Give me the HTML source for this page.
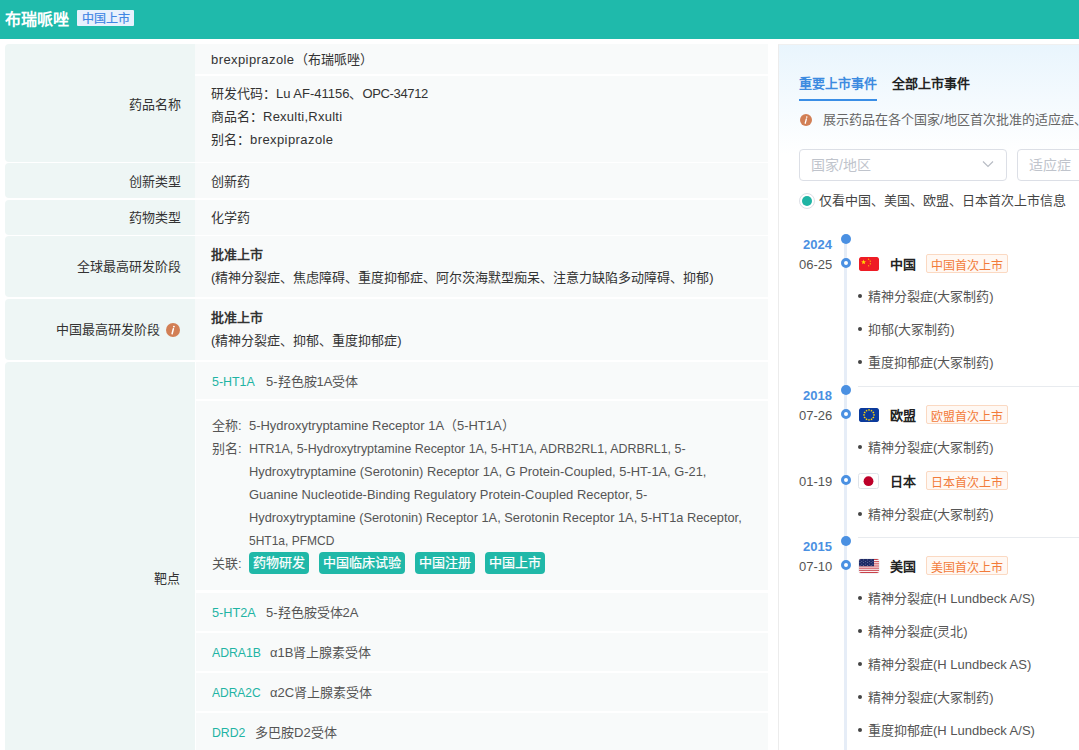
<!DOCTYPE html>
<html lang="zh-CN"><head>
<meta charset="utf-8">
<style>
*{margin:0;padding:0;box-sizing:border-box}
html,body{width:1079px;height:750px;overflow:hidden;background:#fff}
body{font-family:"Liberation Sans",sans-serif;font-size:13px;color:#333;position:relative}
.abs{position:absolute}
.hdr{left:0;top:0;width:1079px;height:39px;background:#1fbaab}
.hdr .t{left:5px;top:9px;font-size:16px;font-weight:bold;color:#fff;line-height:22px;white-space:nowrap}
.hdr .tag{left:77px;top:10px;height:16px;width:57px;background:#e8f1fd;color:#3f86e4;font-size:12px;line-height:18px;text-align:center;border-radius:1px;-webkit-text-stroke:0.2px #3f86e4}
.lab{left:5px;width:190px;background:#eef6f5;border-radius:4px 0 0 4px;text-align:right;padding-right:14px;color:#333;white-space:nowrap}
.val{left:195px;width:573px;background:#f8fafa;color:#444;white-space:nowrap}
.tx{position:absolute;white-space:nowrap;line-height:18px}
.rp{left:778px;top:44px;width:301px;height:706px;border-left:1px solid #ececec;border-top:1px solid #f0f0f0;background:linear-gradient(180deg,#e9f5fd 0px,#ffffff 110px)}
.sv{left:196px;width:572px;background:#f8fafa}
.tg{color:#555}
.tc{color:#1fb4a4}
.gp{display:inline-block;width:10px}
.pill{height:22px;background:#20b8a8;color:#fff;-webkit-text-stroke:0.25px #fff;border-radius:4px;text-align:center;line-height:22px;font-size:13px;white-space:nowrap}
.info{width:12px;height:12px;border-radius:50%;background:#d0825a}
.sel{height:32px;border:1px solid #dcdfe6;border-radius:4px;background:#fff;padding-left:11px;line-height:30px;font-size:14px;color:#c0c4cc;white-space:nowrap;overflow:hidden}
.hr{left:858px;width:221px;height:1px;background:#e8ebef}
.yr{position:absolute;left:803px;font-weight:bold;color:#4a90e2;line-height:18px}
.dt{position:absolute;left:799px;color:#555;line-height:18px}
.yd{position:absolute;left:841px;width:10px;height:10px;border-radius:50%;background:#4a90e2}
.dd{position:absolute;left:841px;width:10px;height:10px;border-radius:50%;border:3px solid #4a90e2;background:#fff}
.flag{position:absolute;left:859px;width:20px;height:14px;border-radius:2px;overflow:hidden}
.cn{position:absolute;left:890px;font-weight:bold;color:#222;line-height:18px}
.otag{position:absolute;left:926px;width:82px;height:19px;border:1px solid #fbd9c2;background:#fff8f3;color:#f27b3a;font-size:12px;line-height:22px;text-align:center;border-radius:2px}
.bl{position:absolute;left:858px;width:4px;height:4px;border-radius:50%;background:#444}
.it{position:absolute;left:868px;color:#555;line-height:18px;white-space:nowrap}
</style>
</head>
<body>
<div class="abs hdr">
  <div class="abs t">布瑞哌唑</div>
  <div class="abs tag">中国上市</div>
</div>

<!-- left table -->
<div class="abs lab" style="top: 44px; height: 118px;"></div>
<div class="abs val" style="top: 44px; height: 30px;"></div>
<div class="abs val" style="top: 76px; height: 86px;"></div>
<div class="tx" style="left: 129px; top: 96px;">药品名称</div>
<div class="tx" style="left: 211px; top: 51px;"><span style="letter-spacing: 0.42px;">brexpiprazole</span>（布瑞哌唑）</div>
<div class="tx" style="left: 211px; top: 85px;">研发代码：Lu AF-41156、<span style="letter-spacing: -0.35px;">OPC-34712</span></div>
<div class="tx" style="left: 211px; top: 108px;">商品名：<span style="letter-spacing: 0.25px;">Rexulti,Rxulti</span></div>
<div class="tx" style="left: 211px; top: 131px;">别名：<span style="letter-spacing: 0.42px;">brexpiprazole</span></div>

<div class="abs lab" style="top: 163px; height: 35px;"></div>
<div class="abs val" style="top: 163px; height: 35px;"></div>
<div class="tx" style="left: 129px; top: 173px;">创新类型</div>
<div class="tx" style="left: 211px; top: 173px;">创新药</div>

<div class="abs lab" style="top: 200px; height: 35px;"></div>
<div class="abs val" style="top: 200px; height: 35px;"></div>
<div class="tx" style="left: 129px; top: 209px;">药物类型</div>
<div class="tx" style="left: 211px; top: 209px;">化学药</div>

<div class="abs lab" style="top: 236px; height: 61px;"></div>
<div class="abs val" style="top: 236px; height: 61px;"></div>
<div class="tx" style="left: 77px; top: 258px;">全球最高研发阶段</div>
<div class="tx" style="left: 211px; top: 246px; font-weight: bold;">批准上市</div>
<div class="tx" style="left: 211px; top: 269px;">(精神分裂症、焦虑障碍、重度抑郁症、阿尔茨海默型痴呆、注意力缺陷多动障碍、抑郁)</div>

<div class="abs lab" style="top: 299px; height: 61px;"></div>
<div class="abs val" style="top: 299px; height: 61px;"></div>
<div class="tx" style="left: 56px; top: 321px;">中国最高研发阶段</div>
<svg class="abs" style="left: 166px; top: 323px;" width="14" height="14" viewBox="0 0 14 14"><circle cx="7" cy="7" r="7" fill="#d27f55"></circle><circle cx="7.9" cy="3.6" r="0.95" fill="#fff"></circle><path d="M7.4 5.8 L6.1 10.8" stroke="#fff" stroke-width="1.5" stroke-linecap="round"></path></svg>
<div class="tx" style="left: 211px; top: 309px; font-weight: bold;">批准上市</div>
<div class="tx" style="left: 211px; top: 332px;">(精神分裂症、抑郁、重度抑郁症)</div>

<div class="abs lab" style="top: 362px; height: 400px; border-radius: 4px 0px 0px;"></div>
<div class="tx" style="left: 154px; top: 570px; color: rgb(51, 51, 51);">靶点</div>
<div class="abs" style="left: 195px; top: 362px; width: 573px; height: 400px; background: rgb(255, 255, 255);"></div>
<div class="abs sv" style="top: 362px; height: 37px;"></div>
<div class="abs sv" style="top: 401px; height: 189px;"></div>
<div class="abs sv" style="top: 593px; height: 38px;"></div>
<div class="abs sv" style="top: 633px; height: 38px;"></div>
<div class="abs sv" style="top: 673px; height: 38px;"></div>
<div class="abs sv" style="top: 713px; height: 38px;"></div>
<div class="tx tc fit-255" style="left: 212px; top: 373px; transform: scaleX(0.9556); transform-origin: 0px 0px;">5-HT1A</div><div class="tx tg" style="left: 266px; top: 373px;">5-羟色胺1A受体</div>
<div class="tx tg" style="left: 212px; top: 417px;">全称:</div>
<div class="tx tg fit-506" style="left: 249px; top: 417px; transform: scaleX(0.9961); transform-origin: 0px 0px;">5-Hydroxytryptamine Receptor 1A（5-HT1A）</div>
<div class="tx tg" style="left: 212px; top: 440px;">别名:</div>
<div class="tx tg fit-685" style="left: 249px; top: 440px; transform: scaleX(0.9561); transform-origin: 0px 0px;">HTR1A, 5-Hydroxytryptamine Receptor 1A, 5-HT1A, ADRB2RL1, ADRBRL1, 5-</div>
<div class="tx tg fit-705" style="left: 249px; top: 463px; transform: scaleX(0.9892); transform-origin: 0px 0px;">Hydroxytryptamine (Serotonin) Receptor 1A, G Protein-Coupled, 5-HT-1A, G-21,</div>
<div class="tx tg fit-647" style="left: 249px; top: 486px; transform: scaleX(0.995); transform-origin: 0px 0px;">Guanine Nucleotide-Binding Regulatory Protein-Coupled Receptor, 5-</div>
<div class="tx tg fit-741" style="left: 249px; top: 509px; transform: scaleX(0.984); transform-origin: 0px 0px;">Hydroxytryptamine (Serotonin) Receptor 1A, Serotonin Receptor 1A, 5-HT1a Receptor,</div>
<div class="tx tg fit-334" style="left: 249px; top: 532px; transform: scaleX(0.9239); transform-origin: 0px 0px;">5HT1a, PFMCD</div>
<div class="tx tg" style="left: 212px; top: 555px;">关联:</div>
<div class="abs pill" style="left: 249px; top: 552px; width: 60px;">药物研发</div>
<div class="abs pill" style="left: 319px; top: 552px; width: 86px;">中国临床试验</div>
<div class="abs pill" style="left: 415px; top: 552px; width: 60px;">中国注册</div>
<div class="abs pill" style="left: 485px; top: 552px; width: 60px;">中国上市</div>
<div class="tx tc fit-256" style="left: 212px; top: 604px; transform: scaleX(0.9778); transform-origin: 0px 0px;">5-HT2A</div><div class="tx tg" style="left: 266px; top: 604px;">5-羟色胺受体2A</div>
<div class="tx tc fit-260" style="left: 212px; top: 644px; transform: scaleX(0.9412); transform-origin: 0px 0px;">ADRA1B</div><div class="tx tg" style="left: 270px; top: 644px;">α1B肾上腺素受体</div>
<div class="tx tc fit-260" style="left: 212px; top: 684px; transform: scaleX(0.9231); transform-origin: 0px 0px;">ADRA2C</div><div class="tx tg" style="left: 270px; top: 684px;">α2C肾上腺素受体</div>
<div class="tx tc fit-245" style="left: 212px; top: 724px; transform: scaleX(0.9429); transform-origin: 0px 0px;">DRD2</div><div class="tx tg" style="left: 255px; top: 724px;">多巴胺D2受体</div>

<!-- right panel -->
<div class="abs rp"></div>
<div class="tx" style="left: 799px; top: 75px; font-weight: bold; color: rgb(61, 139, 224);">重要上市事件</div>
<div class="tx" style="left: 892px; top: 75px; font-weight: bold; color: rgb(34, 34, 34);">全部上市事件</div>
<div class="abs" style="left: 799px; top: 99px; width: 78px; height: 2px; background: rgb(58, 142, 230);"></div>
<svg class="abs" style="left: 800px; top: 114px;" width="12" height="12" viewBox="0 0 14 14"><circle cx="7" cy="7" r="7" fill="#d27f55"></circle><circle cx="7.9" cy="3.6" r="0.95" fill="#fff"></circle><path d="M7.4 5.8 L6.1 10.8" stroke="#fff" stroke-width="1.5" stroke-linecap="round"></path></svg>
<div class="tx" style="left: 823px; top: 111px; color: rgb(102, 102, 102);">展示药品在各个国家/地区首次批准的适应症、其他国家/地区</div>
<div class="abs sel" style="left: 799px; top: 149px; width: 208px;"><span>国家/地区</span></div>
<svg class="abs" style="left: 982px; top: 160px;" width="12" height="8" viewBox="0 0 12 8"><path d="M1 1.5 L6 6.5 L11 1.5" fill="none" stroke="#b8bcc4" stroke-width="1.2"></path></svg>
<div class="abs sel" style="left: 1017px; top: 149px; width: 120px;"><span>适应症</span></div>
<div class="abs" style="left: 799px; top: 193px; width: 16px; height: 16px; border-radius: 50%; border: 1px solid rgb(220, 223, 230); background: rgb(255, 255, 255);"></div>
<div class="abs" style="left: 802px; top: 196px; width: 10px; height: 10px; border-radius: 50%; background: rgb(31, 180, 164);"></div>
<div class="tx" style="left: 819px; top: 192px; color: rgb(68, 68, 68);">仅看中国、美国、欧盟、日本首次上市信息</div>

<div class="abs" style="left: 844px; top: 239px; width: 3px; height: 520px; background: rgb(230, 237, 247);"></div>
<div class="abs hr" style="top: 386px;"></div>
<div class="abs hr" style="top: 537px;"></div>

<div class="yd" style="top: 234px;"></div>
<div class="yr" style="top: 236px;">2024</div>
<div class="dd" style="top: 258px;"></div>
<div class="dt" style="top: 256px;">06-25</div>
<div class="flag" style="top: 257px;"><svg width="20" height="14" viewBox="0 0 20 14"><rect width="20" height="14" rx="1.5" fill="#ee1c25"></rect><polygon points="4.60,2.60 5.22,4.35 7.07,4.40 5.60,5.52 6.13,7.30 4.60,6.25 3.07,7.30 3.60,5.52 2.13,4.40 3.98,4.35" fill="#ffde00"></polygon><polygon points="10.07,1.38 9.97,2.04 10.53,2.40 9.87,2.50 9.70,3.14 9.40,2.55 8.73,2.59 9.21,2.12 8.96,1.49 9.56,1.80" fill="#ffde00"></polygon><polygon points="11.46,3.26 11.59,3.92 12.24,4.07 11.65,4.39 11.72,5.05 11.23,4.59 10.62,4.86 10.90,4.26 10.46,3.75 11.12,3.84" fill="#ffde00"></polygon><polygon points="11.14,5.96 11.48,6.54 12.14,6.45 11.70,6.96 11.98,7.56 11.37,7.29 10.88,7.75 10.95,7.09 10.36,6.77 11.01,6.62" fill="#ffde00"></polygon><polygon points="9.12,7.98 9.64,8.40 10.24,8.09 9.99,8.72 10.47,9.19 9.80,9.15 9.50,9.74 9.33,9.10 8.67,9.00 9.23,8.64" fill="#ffde00"></polygon></svg></div>
<div class="cn" style="top: 256px;">中国</div>
<div class="otag" style="top: 254px;">中国首次上市</div>
<div class="bl" style="top: 294px;"></div><div class="it" style="top: 288px;">精神分裂症(大冢制药)</div>
<div class="bl" style="top: 327px;"></div><div class="it" style="top: 321px;">抑郁(大冢制药)</div>
<div class="bl" style="top: 360px;"></div><div class="it" style="top: 354px;">重度抑郁症(大冢制药)</div>

<div class="yd" style="top: 385px;"></div>
<div class="yr" style="top: 387px;">2018</div>
<div class="dd" style="top: 409px;"></div>
<div class="dt" style="top: 407px;">07-26</div>
<div class="flag" style="top: 408px;"><svg width="20" height="14" viewBox="0 0 20 14"><rect width="20" height="14" rx="1.5" fill="#0b3a9c"></rect><polygon points="15.00,5.75 15.35,6.51 16.19,6.61 15.57,7.19 15.73,8.01 15.00,7.60 14.27,8.01 14.43,7.19 13.81,6.61 14.65,6.51" fill="#ffd400"></polygon><polygon points="14.33,8.25 14.68,9.01 15.52,9.11 14.90,9.69 15.06,10.51 14.33,10.10 13.60,10.51 13.76,9.69 13.14,9.11 13.98,9.01" fill="#ffd400"></polygon><polygon points="12.50,10.08 12.85,10.84 13.69,10.94 13.07,11.52 13.23,12.34 12.50,11.93 11.77,12.34 11.93,11.52 11.31,10.94 12.15,10.84" fill="#ffd400"></polygon><polygon points="10.00,10.75 10.35,11.51 11.19,11.61 10.57,12.19 10.73,13.01 10.00,12.60 9.27,13.01 9.43,12.19 8.81,11.61 9.65,11.51" fill="#ffd400"></polygon><polygon points="7.50,10.08 7.85,10.84 8.69,10.94 8.07,11.52 8.23,12.34 7.50,11.93 6.77,12.34 6.93,11.52 6.31,10.94 7.15,10.84" fill="#ffd400"></polygon><polygon points="5.67,8.25 6.02,9.01 6.86,9.11 6.24,9.69 6.40,10.51 5.67,10.10 4.94,10.51 5.10,9.69 4.48,9.11 5.32,9.01" fill="#ffd400"></polygon><polygon points="5.00,5.75 5.35,6.51 6.19,6.61 5.57,7.19 5.73,8.01 5.00,7.60 4.27,8.01 4.43,7.19 3.81,6.61 4.65,6.51" fill="#ffd400"></polygon><polygon points="5.67,3.25 6.02,4.01 6.86,4.11 6.24,4.69 6.40,5.51 5.67,5.10 4.94,5.51 5.10,4.69 4.48,4.11 5.32,4.01" fill="#ffd400"></polygon><polygon points="7.50,1.42 7.85,2.18 8.69,2.28 8.07,2.86 8.23,3.68 7.50,3.27 6.77,3.68 6.93,2.86 6.31,2.28 7.15,2.18" fill="#ffd400"></polygon><polygon points="10.00,0.75 10.35,1.51 11.19,1.61 10.57,2.19 10.73,3.01 10.00,2.60 9.27,3.01 9.43,2.19 8.81,1.61 9.65,1.51" fill="#ffd400"></polygon><polygon points="12.50,1.42 12.85,2.18 13.69,2.28 13.07,2.86 13.23,3.68 12.50,3.27 11.77,3.68 11.93,2.86 11.31,2.28 12.15,2.18" fill="#ffd400"></polygon><polygon points="14.33,3.25 14.68,4.01 15.52,4.11 14.90,4.69 15.06,5.51 14.33,5.10 13.60,5.51 13.76,4.69 13.14,4.11 13.98,4.01" fill="#ffd400"></polygon></svg></div>
<div class="cn" style="top: 407px;">欧盟</div>
<div class="otag" style="top: 405px;">欧盟首次上市</div>
<div class="bl" style="top: 445px;"></div><div class="it" style="top: 439px;">精神分裂症(大冢制药)</div>
<div class="dd" style="top: 475px;"></div>
<div class="dt" style="top: 473px;">01-19</div>
<div class="flag" style="top: 473px; left: 858px; width: 21px; height: 16px; border-radius: 0px;"><svg width="21" height="16" viewBox="0 0 21 16"><rect x="0.5" y="0.5" width="20" height="15" rx="2" fill="#fff" stroke="#dfe4ea"></rect><circle cx="10.5" cy="8.2" r="4.9" fill="#bd0029"></circle></svg></div>
<div class="cn" style="top: 473px;">日本</div>
<div class="otag" style="top: 471px;">日本首次上市</div>
<div class="bl" style="top: 512px;"></div><div class="it" style="top: 506px;">精神分裂症(大冢制药)</div>

<div class="yd" style="top: 536px;"></div>
<div class="yr" style="top: 538px;">2015</div>
<div class="dd" style="top: 560px;"></div>
<div class="dt" style="top: 558px;">07-10</div>
<div class="flag" style="top: 559px; box-shadow: rgb(227, 230, 234) 0px 0px 0px 0.5px;"><svg width="20" height="14" viewBox="0 0 20 14"><rect width="20" height="14" rx="1" fill="#fff"></rect><rect y="0.00" width="20" height="1.08" fill="#c9414a"></rect><rect y="2.15" width="20" height="1.08" fill="#c9414a"></rect><rect y="4.31" width="20" height="1.08" fill="#c9414a"></rect><rect y="6.46" width="20" height="1.08" fill="#c9414a"></rect><rect y="8.62" width="20" height="1.08" fill="#c9414a"></rect><rect y="10.77" width="20" height="1.08" fill="#c9414a"></rect><rect y="12.92" width="20" height="1.08" fill="#c9414a"></rect><rect width="15" height="7.2" fill="#1e2a66"></rect><circle cx="1.00" cy="0.90" r="0.4" fill="#c8cce0"></circle><circle cx="4.70" cy="0.90" r="0.4" fill="#c8cce0"></circle><circle cx="8.40" cy="0.90" r="0.4" fill="#c8cce0"></circle><circle cx="12.10" cy="0.90" r="0.4" fill="#c8cce0"></circle><circle cx="2.85" cy="2.30" r="0.4" fill="#c8cce0"></circle><circle cx="6.55" cy="2.30" r="0.4" fill="#c8cce0"></circle><circle cx="10.25" cy="2.30" r="0.4" fill="#c8cce0"></circle><circle cx="13.95" cy="2.30" r="0.4" fill="#c8cce0"></circle><circle cx="1.00" cy="3.70" r="0.4" fill="#c8cce0"></circle><circle cx="4.70" cy="3.70" r="0.4" fill="#c8cce0"></circle><circle cx="8.40" cy="3.70" r="0.4" fill="#c8cce0"></circle><circle cx="12.10" cy="3.70" r="0.4" fill="#c8cce0"></circle><circle cx="2.85" cy="5.10" r="0.4" fill="#c8cce0"></circle><circle cx="6.55" cy="5.10" r="0.4" fill="#c8cce0"></circle><circle cx="10.25" cy="5.10" r="0.4" fill="#c8cce0"></circle><circle cx="13.95" cy="5.10" r="0.4" fill="#c8cce0"></circle><circle cx="1.00" cy="6.50" r="0.4" fill="#c8cce0"></circle><circle cx="4.70" cy="6.50" r="0.4" fill="#c8cce0"></circle><circle cx="8.40" cy="6.50" r="0.4" fill="#c8cce0"></circle><circle cx="12.10" cy="6.50" r="0.4" fill="#c8cce0"></circle></svg></div>
<div class="cn" style="top: 558px;">美国</div>
<div class="otag" style="top: 556px;">美国首次上市</div>
<div class="bl" style="top: 596px;"></div><div class="it" style="top: 590px;">精神分裂症(H Lundbeck A/S)</div>
<div class="bl" style="top: 629px;"></div><div class="it" style="top: 623px;">精神分裂症(灵北)</div>
<div class="bl" style="top: 662px;"></div><div class="it" style="top: 656px;">精神分裂症(H Lundbeck AS)</div>
<div class="bl" style="top: 695px;"></div><div class="it" style="top: 689px;">精神分裂症(大冢制药)</div>
<div class="bl" style="top: 728px;"></div><div class="it" style="top: 722px;">重度抑郁症(H Lundbeck A/S)</div>


</body></html>
